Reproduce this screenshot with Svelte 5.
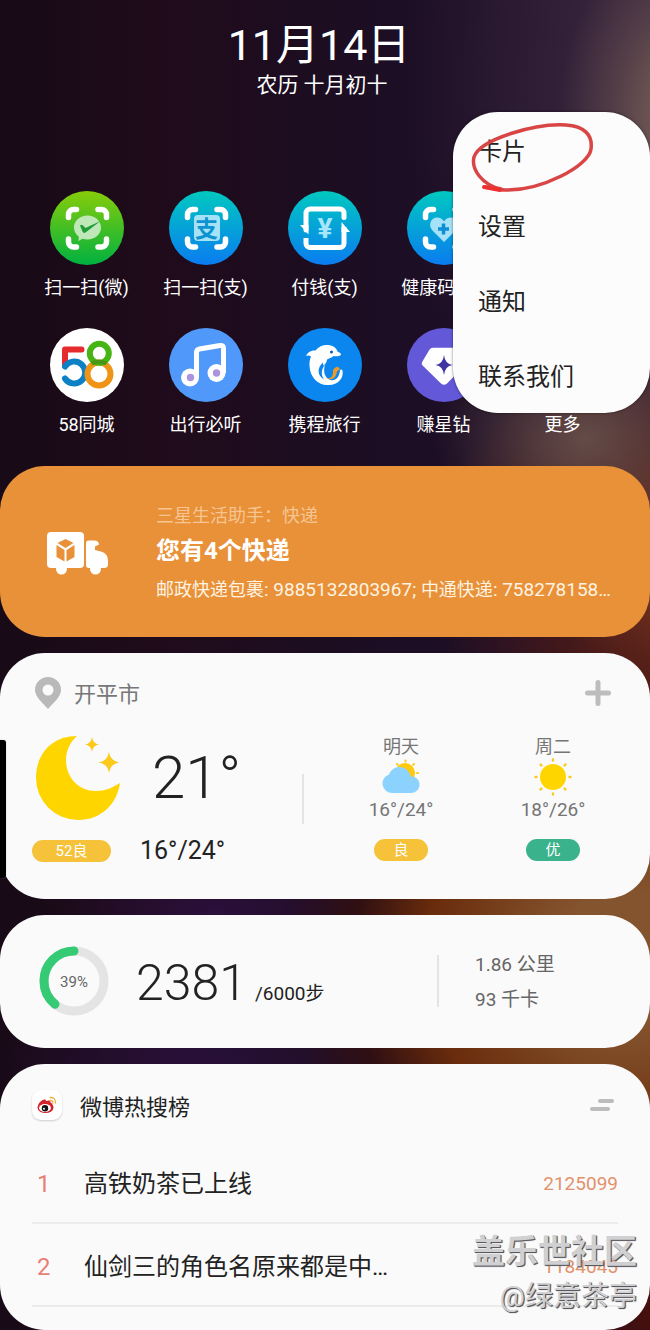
<script lang="ts">
	type App = { icon: string; name: string; from: string; to: string }

	const apps: (App | null)[] = [
		{ icon: 'wechat', name: '扫一扫(微)', from: '#86cc0a', to: '#00b140' },
		{ icon: 'alipay', name: '扫一扫(支)', from: '#00c8c0', to: '#0a7cf0' },
		{ icon: 'pay', name: '付钱(支)', from: '#00c8c0', to: '#0a7cf0' },
		{ icon: 'health', name: '健康码(支)', from: '#00c8c0', to: '#0a7cf0' },
		null,
		{ icon: '58', name: '58同城', from: '#ffffff', to: '#ffffff' },
		{ icon: 'music', name: '出行必听', from: '#5099fa', to: '#5099fa' },
		{ icon: 'trip', name: '携程旅行', from: '#0a86ee', to: '#0a86ee' },
		{ icon: 'diamond', name: '赚星钻', from: '#6258d8', to: '#6258d8' },
		{ icon: 'more', name: '更多', from: '#55555f', to: '#55555f' }
	]

	const menu = ['卡片', '设置', '通知', '联系我们']

	const forecast = [
		{ day: '明天', icon: 'cloudy', range: '16°/24°', air: '良', good: false },
		{ day: '周二', icon: 'sunny', range: '18°/26°', air: '优', good: true }
	]

	const topics = [
		{ title: '高铁奶茶已上线', count: 2125099 },
		{ title: '仙剑三的角色名原来都是中…', count: 1184045 }
	]

	const steps = 2381
	const goal = 6000
	const percent = Math.floor((steps / goal) * 100)
	const ring = 2 * Math.PI * 30
</script>

<main class="page">
	<header>
		<h1>11月14日</h1>
		<p>农历 十月初十</p>
	</header>

	<nav class="apps">
		{#each apps as app}
			{#if app}
				<a href="#{app.icon}" class="app">
					<svg class="app-icon" viewBox="0 0 74 74" aria-hidden="true">
						<defs>
							<linearGradient id="bg-{app.icon}" x1="0" y1="0" x2="0" y2="1">
								<stop offset="0" stop-color={app.from} />
								<stop offset="1" stop-color={app.to} />
							</linearGradient>
						</defs>
						<circle cx="37" cy="37" r="37" fill="url(#bg-{app.icon})" />
						{#if ['wechat', 'alipay', 'health'].includes(app.icon)}
							<path
								d="M18.5 26.500v-3a5 5 0 0 1 5-5h3M48 18.500h3.500a5 5 0 0 1 5 5v3M56.500 48v3a5 5 0 0 1-5 5H48M26.500 56h-3a5 5 0 0 1-5-5v-3"
								fill="none" stroke="#fff" stroke-width="5.500" stroke-linecap="round" />
						{/if}
						{#if app.icon === 'wechat'}
							<path d="M37.500 24.500c7.500 0 13.500 5.200 13.500 12S45 48.500 37.500 48.500c-1.800 0-3.600-.3-5.100-.8L28.500 50l.3-4.300C25.900 43.500 24 40.200 24 36.500c0-6.800 6-12 13.500-12z" fill="#bfe8b8" />
							<path d="M30 34.500q1.500-1.500 3 0l2.500 2.500L50.500 30 35.500 41.500q-2 1.200-3-1z" fill="#1f9c38" />
						{:else if app.icon === 'alipay'}
							<rect x="25" y="24" width="26" height="26" rx="4" fill="#a5e2f8" />
							<text x="37.500" y="45.500" class="glyph bold" font-size="23" fill="#0c93d0">支</text>
						{:else if app.icon === 'pay'}
							<g fill="none" stroke="#fff" stroke-width="5" stroke-linejoin="round">
								<path d="M18 39V22a4 4 0 0 1 4-4h30a4 4 0 0 1 4 4v4.500" stroke-linecap="round" />
								<path d="M18 47v5.500a4 4 0 0 0 4 4h30a4 4 0 0 0 4-4V36" />
							</g>
							<path d="M12 34h8.500v9.500zM62 41h-8.500v-10z" fill="#fff" />
							<text x="37" y="46.500" class="glyph bold" font-size="28" fill="#a5e6fa">¥</text>
						{:else if app.icon === 'health'}
							<path d="M37 51 25.500 39.500c-5-5.500-1.500-13 4.500-13 3 0 5.500 1.500 7 4 1.500-2.500 4-4 7-4 6 0 9.500 7.500 4.500 13z" fill="#a5e2f8" />
							<path d="M36.500 32.500v11M31 38h11" stroke="#0c8fd6" stroke-width="3.500" />
						{:else if app.icon === '58'}
							<g fill="none" stroke-width="6">
								<path d="M31.500 21.500H15V37" stroke="#e62b2e" stroke-linecap="round" stroke-linejoin="round" />
								<path d="M15 38.500a11 11 0 1 1 0 12" stroke="#0c80c4" stroke-linecap="round" />
								<circle cx="49" cy="46" r="11.500" stroke="#f09418" />
								<circle cx="49.300" cy="25.300" r="9.500" stroke="#45b414" />
								<path d="M41.500 35.500q7.500-3.500 15 0" stroke="#4a9418" stroke-width="4" />
							</g>
						{:else if app.icon === 'music'}
							<path d="M27.500 49V24.500q0-3 3-3.500L51 17.500q3.500-.5 3.500 3V45" fill="none" stroke="#fff" stroke-width="5" />
							<circle cx="21" cy="49.500" r="9" fill="#fff" />
							<circle cx="47.500" cy="45" r="9" fill="#fff" />
							<circle cx="21.500" cy="49.500" r="3.700" fill="#ac93df" />
							<circle cx="47.500" cy="45" r="3.700" fill="#ac93df" />
						{:else if app.icon === 'trip'}
							<path d="M18 28c1.500-3.500 5-6 9.500-5.500C31 18 36 16.500 40 17c5 .3 8.500 3 9.500 6.500 2 .8 3.500 1.700 3.500 3.500-2 1.500-5 1.300-7.500 1-2 1.800-4.500 2.500-6.500 3.500-.2 2.500-1.500 4.500-3.500 6-.5-1-.7-2-.5-3-6 5-6 13 1 17-3.500-5-2.500-10.500 1-15-2 7-.5 13.500 5.500 15.500 5 1 8.500-2 9.500-9.500.5-1.500 2-1.300 2.500 0C56 50 50 57 41 57c-11 1-19-8-19.500-19-.2-3.500.2-6.500 1.500-9.500-1.800-1.300-3.300-1.300-5-.5z" fill="#fff" />
							<path d="M38 50.500c5 .5 7-2.500 7-6.500-.2-3 2-5.500 5-5 1.200.5 1.600 2 2 3-2.500.2-3.200 1.500-3.500 3.500-1 5-5.500 7-10.500 5z" fill="#ec9a2a" />
							<circle cx="43.500" cy="24" r="1.500" fill="#0a60b8" />
						{:else if app.icon === 'diamond'}
							<path d="M26 19.800h23q2 0 3 1.500l7 12q1 2-.6 3.500L40 55.500q-3 2.500-6 0L15.600 37.500q-1.600-1.600-.5-3.600l7.500-12.500q1-1.600 3.400-1.600z" fill="#fff" />
							<path d="M37 27q1 9 8.500 10-7.500 1-8.500 10-1-9-8.500-10 7.500-1 8.500-10z" fill="#3f35a0" />
						{:else}
							<path d="M22 37h.1M37 37h.1M52 37h.1" stroke="#fff" stroke-width="7" stroke-linecap="round" />
						{/if}
					</svg>
					<span>{app.name}</span>
				</a>
			{:else}
				<span></span>
			{/if}
		{/each}
	</nav>

	<section class="card express">
		<svg class="truck" viewBox="0 0 62 44" aria-hidden="true">
			<g fill="#fff">
				<rect x="0" y="1" width="37" height="36" rx="4" />
				<path d="M41.500 9.500h6q4 0 4.500 4l-4 2v3.500l6 1.500q7 2 7 9v4q0 3.500-4 3.500H42q-3 0-3-3V12.500q0-3 2.500-3z" />
				<circle cx="14.500" cy="38" r="5.500" />
				<circle cx="48.500" cy="38" r="5.500" />
			</g>
			<path d="M18.500 8l8 4-8 5-8-5zM9.500 14l8 5v11.500l-8-4.500zM27.500 14l-8 5v11.500l8-4.500z" fill="#e89138" />
		</svg>
		<div class="express-text">
			<p class="source">三星生活助手：快递</p>
			<h2>您有4个快递</h2>
			<p class="parcels"><span>邮政快递包裹</span>: 9885132803967; <span>中通快递</span>: 758278158…</p>
		</div>
	</section>

	<section class="card weather">
		<div class="card-head">
			<svg width="26" height="32" viewBox="0 0 26 32" aria-hidden="true">
				<path d="M13 0a13 13 0 0 1 13 13c0 7-8 13-13 19C8 26 0 20 0 13A13 13 0 0 1 13 0zm0 7.500a5.500 5.500 0 1 0 0 11 5.500 5.500 0 0 0 0-11z" fill="#b9b9b9" />
			</svg>
			<h2 class="city">开平市</h2>
			<button class="add" aria-label="添加">
				<svg width="26" height="26" viewBox="0 0 26 26">
					<path d="M13 2.500v21M2.500 13h21" stroke="#bdbdbd" stroke-width="5" stroke-linecap="round" />
				</svg>
			</button>
		</div>
		<div class="weather-body">
			<div class="now">
				<svg width="86" height="86" viewBox="0 0 86 86" aria-hidden="true">
					<path d="M42 1C16 1 1 20 1 43a42 42 0 0 0 42 42c23 0 39-16 42-37-8 5-15 8-24 8-18 0-30-14-30-31 0-9 4-18 11-24z" fill="#ffd500" />
					<path d="M57 2q1 7 7 7.500-6 .5-7 7.500-1-7-7-7.500 6-.5 7-7.500zM74 17q1.500 9.500 10.500 10.500Q75.500 28.500 74 38q-1.500-9.500-10.500-10.500Q72.500 26.500 74 17z" fill="#fcca1c" />
				</svg>
				<strong class="temp">21°</strong>
				<span class="pill wide">52良</span>
				<span class="range">16°/24°</span>
			</div>
			<div class="forecast">
				{#each forecast as item}
					<div class="day">
						<span class="day-name">{item.day}</span>
						<svg width="38" height="38" viewBox="0 0 38 38" aria-hidden="true">
							{#if item.icon === 'cloudy'}
								<g stroke="#fcca1c" stroke-width="2" stroke-linecap="round">
									<path d="M23.500 2.500v1M15 6l.8.8M32 6l-.8.8M36 15h-1" />
								</g>
								<circle cx="23" cy="15" r="10" fill="#ffc90e" />
								<path d="M10 35a9.500 9.500 0 0 1-3-18.500C9 11.500 13 9 17.500 9c5.500 0 10 4 11.500 9.500 5 0 8.500 3.500 8.500 8s-3.500 8.500-8.500 8.500z" fill="#8cd2ff" />
							{:else}
								<circle cx="19" cy="19" r="13" fill="#ffd500" />
								<path d="M19 1.500v1M19 35.500v1M1.500 19h1M35.500 19h1M6.600 6.600l.8.8M30.600 30.600l.8.8M31.400 6.600l-.8.8M7.400 30.600l-.8.8" stroke="#fcca1c" stroke-width="2.400" stroke-linecap="round" />
							{/if}
						</svg>
						<span class="day-range">{item.range}</span>
						<span class="pill" class:good={item.good}>{item.air}</span>
					</div>
				{/each}
			</div>
		</div>
		<div class="edge-handle"></div>
	</section>

	<section class="card steps">
		<svg class="ring" viewBox="0 0 70 70" role="img" aria-label="{percent}%">
			<g fill="none" stroke-width="9">
				<circle cx="35" cy="35" r="30" stroke="#e4e4e4" />
				<!-- mirrored so that the progress runs anticlockwise from the top -->
				<circle
					cx="35" cy="35" r="30" stroke="#35cb74" stroke-linecap="round"
					stroke-dasharray="{(ring * percent) / 100} {ring}"
					transform="matrix(0 -1 -1 0 70 70)" />
			</g>
			<text x="35" y="41" class="ring-text">{percent}%</text>
		</svg>
		<p class="count"><strong>{steps}</strong><span>/{goal}步</span></p>
		<div class="totals">
			<p>1.86 公里</p>
			<p>93 千卡</p>
		</div>
	</section>

	<section class="card hot">
		<div class="hot-head">
			<svg class="weibo" viewBox="0 0 30 30" aria-hidden="true">
				<ellipse cx="13.500" cy="17.500" rx="8" ry="5.500" fill="#d2232c" />
				<path d="M6 16q1-5 6-6.500 2.500-.5 2 1.500 5-1.500 4.500 1.500 2.500 1 2 4z" fill="#d2232c" />
				<ellipse cx="13" cy="18" rx="6" ry="4" fill="#fff" />
				<circle cx="13" cy="18.200" r="3.200" fill="#111" />
				<circle cx="12" cy="18.800" r="1" fill="#fff" />
				<path d="M18 7.500q5.500-.5 5.500 5.500M18 10.500q3-.3 2.800 2.500" fill="none" stroke="#e8b445" stroke-width="1.400" stroke-linecap="round" />
			</svg>
			<h2>微博热搜榜</h2>
			<button class="sort" aria-label="排序">
				<svg width="24" height="14" viewBox="0 0 24 14">
					<path d="M10 3h12M2 11h16" stroke="#bdbdbd" stroke-width="4" stroke-linecap="round" />
				</svg>
			</button>
		</div>
		<ol>
			{#each topics as topic, i}
				<li>
					<span class="rank">{i + 1}</span>
					<a href="#topic-{i + 1}">{topic.title}</a>
					<span class="hits">{topic.count}</span>
				</li>
			{/each}
		</ol>
		<div class="watermark">
			<b>盖乐世社区</b>
			<span>@绿意茶亭</span>
		</div>
	</section>

	<div class="menu" role="menu">
		{#each menu as label}
			<button role="menuitem">{label}</button>
		{/each}
		<svg class="scribble" viewBox="0 0 126 72" aria-hidden="true">
			<path d="M31 66C12 62 1 46 4 34 10 16 66 0 96 2c18 1 27 10 25 24-2 17-50 42-86 41-7 0-13-2-20-3" fill="none" stroke="#d94545" stroke-width="3.500" stroke-linecap="round" />
			<path d="M14 64l16 3" stroke="#ee3030" stroke-width="4" stroke-linecap="round" />
		</svg>
	</div>
</main>

<style>
	:global(body) {
		margin: 0;
		background: #150a1c;
	}

	.page {
		position: relative;
		box-sizing: border-box;
		min-height: 100vh;
		display: flex;
		flex-direction: column;
		overflow: hidden;
		font-family: Roboto, 'Noto Sans CJK SC', sans-serif;
		font-weight: 400;
		color: #222;
		background:
			radial-gradient(ellipse 130px 200px at 106% 9%, rgba(138, 112, 92, 0.9), rgba(138, 112, 92, 0.3) 60%, transparent),
			radial-gradient(ellipse 150px 120px at 90% 33%, rgba(110, 88, 80, 0.8), rgba(110, 88, 80, 0.3) 60%, transparent),
			radial-gradient(ellipse 260px 240px at 106% 43%, #84381a, rgba(100, 34, 16, 0.5) 55%, transparent),
			radial-gradient(ellipse 340px 330px at 96% 72%, #84542e 20%, #6a2c0c 58%, rgba(60, 16, 6, 0.6) 80%, transparent),
			radial-gradient(ellipse 160px 100px at 33% 69%, #2b103c, transparent),
			radial-gradient(ellipse 200px 100px at 30% 80%, #28103a, transparent),
			radial-gradient(ellipse 160px 180px at 104% 98%, #4d1006, transparent),
			radial-gradient(ellipse 260px 520px at 102% 6%, #3e2b42, transparent),
			linear-gradient(90deg, #180a17, #1f0b1b 25%, #1c0e24 60%, #200f2a);
	}

	h1,
	h2,
	p,
	ol {
		margin: 0;
		padding: 0;
		font-weight: 400;
	}

	button {
		padding: 0;
		border: 0;
		background: none;
		font: inherit;
		color: inherit;
		cursor: pointer;
	}

	a {
		color: inherit;
		text-decoration: none;
	}

	svg {
		display: block;
	}

	header {
		padding: 20px 12px 0 0;
		text-align: center;
		color: #fff;
	}

	h1 {
		font-size: 43px;
		line-height: 50px;
	}

	header p {
		padding-left: 6px;
		font-size: 21px;
		line-height: 30px;
	}

	.apps {
		display: grid;
		grid-template-columns: repeat(5, 1fr);
		row-gap: 26px;
		padding: 91px 28px 27px 27px;
	}

	.app {
		display: flex;
		flex-direction: column;
		align-items: center;
		gap: 9px;
		font-size: 18px;
		line-height: 28px;
		white-space: nowrap;
		color: #fff;
	}

	.app-icon {
		width: 74px;
		height: 74px;
	}

	.glyph {
		text-anchor: middle;
	}

	.bold {
		font-weight: 700;
	}

	.card {
		position: relative;
		border-radius: 45px;
		background: #fafafa;
	}

	.card + .card {
		margin-top: 16px;
	}

	.express {
		display: flex;
		align-items: center;
		gap: 47px;
		padding: 35px 32px 32px 47px;
		background: #e89138;
		color: #fff;
	}

	.truck {
		flex: none;
		width: 62px;
		height: 44px;
	}

	.express-text {
		min-width: 0;
	}

	.source {
		font-size: 18px;
		line-height: 30px;
		color: #f6c592;
	}

	.express h2 {
		font-size: 24px;
		line-height: 40px;
		font-weight: 700;
	}

	.parcels {
		padding-top: 4px;
		font-size: 19px;
		line-height: 30px;
		white-space: nowrap;
		color: #fff3e2;
	}

	.parcels span {
		font-size: 18px;
	}

	.card-head,
	.hot-head {
		display: flex;
		align-items: center;
	}

	.card-head {
		height: 32px;
		padding: 24px 39px 0 35px;
		color: #777;
	}

	.city {
		flex: 1;
		padding: 0 0 3px 13px;
		font-size: 22px;
	}

	.weather-body {
		display: flex;
		padding: 26px 21px 37px 32px;
	}

	.now {
		flex: 272;
		display: grid;
		grid-template-columns: 108px 1fr;
		grid-template-rows: 86px 22px;
		row-gap: 19px;
		align-items: center;
	}

	.now > svg {
		margin-left: 3px;
	}

	.temp {
		padding-left: 12px;
		font-size: 60px;
		line-height: 86px;
		font-weight: 300;
	}

	.range {
		font-size: 25px;
		line-height: 22px;
	}

	.pill {
		width: 54px;
		border-radius: 11px;
		background: #f5c23a;
		color: #fff;
		font-size: 15px;
		line-height: 22px;
		text-align: center;
	}

	.pill.wide {
		width: 79px;
	}

	.pill.good {
		background: #3ab28c;
	}

	.forecast {
		flex: 304;
		position: relative;
		display: flex;
		padding-left: 21px;
	}

	.forecast::before {
		content: '';
		position: absolute;
		left: -2px;
		top: 39px;
		width: 2px;
		height: 50px;
		background: #e4e4e4;
	}

	.day {
		flex: 1;
		display: flex;
		flex-direction: column;
		align-items: center;
		color: #757575;
	}

	.day-name {
		font-size: 18px;
		line-height: 23px;
	}

	.day-range {
		padding: 2px 0 17px;
		font-size: 19px;
		line-height: 24px;
	}

	.edge-handle {
		position: absolute;
		left: -2px;
		top: 87px;
		width: 8px;
		height: 138px;
		border-radius: 3px;
		background: #000;
		box-shadow: 0 0 1px #888;
	}

	.steps {
		display: flex;
		align-items: center;
		padding: 31px 32px 32px 39px;
	}

	.ring {
		flex: none;
		width: 70px;
		height: 70px;
	}

	.ring-text {
		font-size: 15px;
		text-anchor: middle;
		fill: #666;
	}

	.count {
		flex: 301;
		display: flex;
		align-items: baseline;
		gap: 8px;
		padding: 14px 0 0 27px;
		font-size: 19px;
		line-height: 40px;
	}

	.count strong {
		font-size: 50px;
		font-weight: 300;
	}

	.totals {
		flex: 143;
		padding: 0 0 0 36px;
		border-left: 2px solid #e4e4e4;
		font-size: 19px;
		line-height: 35px;
		font-weight: 300;
		color: #666;
	}

	.totals p:first-child {
		margin-top: -8px;
	}

	.totals p:last-child {
		margin-bottom: -10px;
	}

	.hot {
		padding: 0 32px 23px;
	}

	.hot-head {
		height: 77px;
		box-sizing: border-box;
		padding-top: 5px;
	}

	.weibo {
		width: 30px;
		height: 30px;
		border-radius: 9px;
		background: #fff;
		box-shadow: 0 1px 2px #ccc;
	}

	.hot h2 {
		flex: 1;
		padding-left: 18px;
		font-size: 22px;
	}

	.sort {
		padding-right: 4px;
	}

	ol {
		list-style: none;
	}

	li {
		display: flex;
		align-items: center;
		padding-top: 5px;
		border-bottom: 2px solid #ececec;
		font-size: 24px;
		line-height: 76px;
	}

	.rank {
		width: 52px;
		box-sizing: border-box;
		padding-left: 5px;
		color: #e87f76;
	}

	li a {
		flex: 1;
	}

	.hits {
		font-size: 19px;
		color: #e2916b;
	}

	.watermark {
		position: absolute;
		right: 13px;
		bottom: 12px;
		display: flex;
		flex-direction: column;
		align-items: flex-end;
		color: #d0d0d2;
		text-shadow: 1px 1px 1px #55555c, 1px 1px 0 #77777c;
		pointer-events: none;
	}

	.watermark b {
		font-size: 33px;
		line-height: 48px;
	}

	.watermark span {
		font-size: 28px;
		line-height: 42px;
	}

	.menu {
		position: absolute;
		top: 112px;
		right: 0;
		width: 197px;
		box-sizing: border-box;
		padding-top: 1px;
		display: flex;
		flex-direction: column;
		border-radius: 45px;
		background: #fcfcfc;
		box-shadow: 0 0 3px rgba(0, 0, 0, 0.5);
	}

	.menu button {
		padding: 3px 0 0 25px;
		font-size: 24px;
		line-height: 72px;
		text-align: left;
	}

	.scribble {
		position: absolute;
		left: 17px;
		top: 11px;
		width: 126px;
		height: 72px;
		pointer-events: none;
	}
</style>
